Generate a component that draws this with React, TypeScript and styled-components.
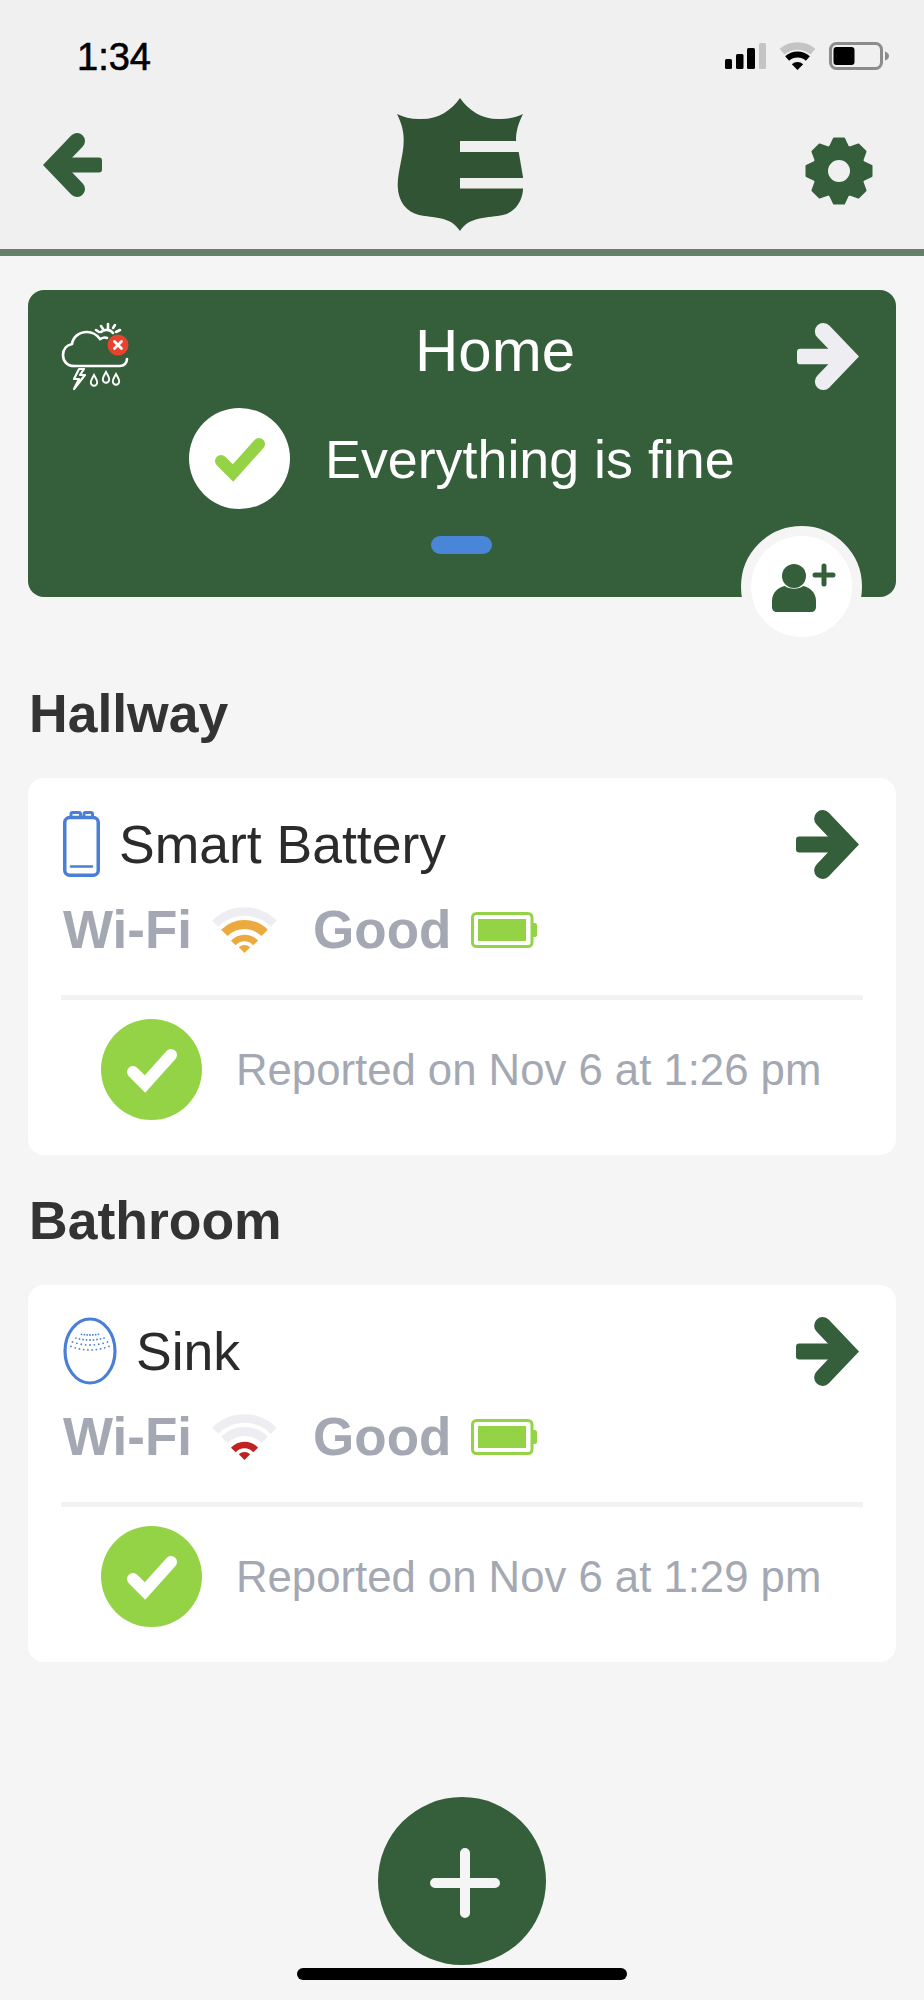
import React from 'react';
import styled, { createGlobalStyle } from 'styled-components';

const GREEN = '#355e3b';
const LIME = '#93d345';
const BLUE = '#4a7fd6';
const MUTED = '#a4a8b2';
const WIFI_OFF = '#eeeef2';

const GlobalStyle = createGlobalStyle`
  html, body {
    margin: 0;
    padding: 0;
    background: #f5f5f5;
  }
  * {
    box-sizing: border-box;
  }
`;

const Screen = styled.div`
  width: 924px;
  height: 2000px;
  display: flex;
  flex-direction: column;
  background: #f5f5f5;
  font-family: "Liberation Sans", Arial, sans-serif;
  overflow: hidden;
`;

const Header = styled.header`
  height: 256px;
  flex-shrink: 0;
  background: #f0f0f0;
  border-bottom: 7px solid #648068;
`;

const StatusBar = styled.div`
  height: 98px;
  padding: 38px 35px 0 77px;
  display: flex;
  justify-content: space-between;
  align-items: flex-start;
`;

const Time = styled.span`
  font-size: 38px;
  line-height: 38px;
  color: #000;
  -webkit-text-stroke: 0.6px #000;
`;

const StatusIcons = styled.div`
  display: flex;
  align-items: center;
  gap: 13px;
  margin-top: 4px;
`;

const NavBar = styled.nav`
  display: grid;
  grid-template-columns: 1fr 127px 1fr;
  align-items: center;
  height: 133px;
  padding: 0 46px 0 43px;
`;

const NavLeft = styled.div`
  justify-self: start;
  display: flex;
`;

const NavRight = styled.div`
  justify-self: end;
  display: flex;
  margin: 12px 5px 0 0;
`;

const Content = styled.main`
  padding: 34px 28px 0;
`;

const Hero = styled.section`
  position: relative;
  height: 307px;
  padding: 33px 37px 0 34px;
  background: ${GREEN};
  border-radius: 16px;
  color: #fff;
`;

const HeroTop = styled.div`
  display: flex;
  align-items: center;
  height: 66px;
`;

const HeroTitle = styled.h1`
  margin: -10px 0 0 283px;
  font-size: 60px;
  line-height: 66px;
  font-weight: 400;
`;

const HeroArrow = styled.div`
  margin-left: auto;
  display: flex;
`;

const HeroStatus = styled.div`
  display: flex;
  align-items: center;
  gap: 35px;
  margin: 19px 0 0 127px;
`;

const HeroStatusText = styled.span`
  font-size: 53.8px;
  line-height: 60px;
`;

const StatusCircle = styled.div<{ $bg: string }>`
  width: 101px;
  height: 101px;
  border-radius: 50%;
  flex-shrink: 0;
  display: flex;
  align-items: center;
  justify-content: center;
  background: ${p => p.$bg};
`;

const Pager = styled.div`
  width: 61px;
  height: 18px;
  margin: 27px auto 0;
  border-radius: 9px;
  background: #4a86d8;
  position: relative;
  left: 1px;
`;

const InviteBadge = styled.button`
  position: absolute;
  left: 713px;
  top: 236px;
  width: 121px;
  height: 121px;
  padding: 3px 0 0 5px;
  border: 10px solid #f5f5f5;
  border-radius: 50%;
  background: #fff;
  display: flex;
  align-items: center;
  justify-content: center;
`;

const SectionTitle = styled.h2`
  margin: 0;
  padding-left: 1px;
  font-size: 53.5px;
  line-height: 60px;
  font-weight: 700;
  color: #333;
`;

const HallwayTitle = styled(SectionTitle)`
  margin-top: 87px;
`;

const BathroomTitle = styled(SectionTitle)`
  margin-top: 36px;
`;

const DeviceCard = styled.article`
  height: 377px;
  margin-top: 34px;
  padding: 32px 33px 0;
  background: #fff;
  border-radius: 16px;
`;

const TitleRow = styled.div`
  display: flex;
  align-items: center;
  height: 68px;
  padding-left: 2px;
`;

const DeviceName = styled.h3<{ $gap: number }>`
  margin: 2px 0 0 ${p => p.$gap}px;
  font-size: 53.5px;
  line-height: 60px;
  font-weight: 400;
  color: #2b2b2b;
`;

const CardArrow = styled.div`
  margin-left: auto;
  margin-right: 4px;
  display: flex;
`;

const StatsRow = styled.div`
  display: flex;
  align-items: center;
  height: 68px;
  margin-top: 18px;
  padding-left: 2px;
`;

const StatLabel = styled.span`
  font-size: 53px;
  line-height: 60px;
  font-weight: 700;
  color: ${MUTED};
`;

const WifiSlot = styled.div`
  display: flex;
  margin: 0 36px 0 20px;
`;

const BatterySlot = styled.div`
  display: flex;
  margin-left: 20px;
`;

const Divider = styled.hr`
  height: 5px;
  margin: 31px 0 0;
  border: 0;
  background: #f2f2f2;
`;

const ReportRow = styled.div`
  display: flex;
  align-items: center;
  gap: 34px;
  margin-top: 19px;
  padding-left: 40px;
`;

const ReportText = styled.span`
  font-size: 43.7px;
  line-height: 50px;
  color: ${MUTED};
  white-space: nowrap;
`;

const Fab = styled.button`
  width: 168px;
  height: 168px;
  margin: 135px auto 0;
  padding: 4px 0 0 5px;
  border: 0;
  border-radius: 50%;
  background: ${GREEN};
  display: flex;
  align-items: center;
  justify-content: center;
  flex-shrink: 0;
`;

const HomeBar = styled.div`
  width: 330px;
  height: 12px;
  margin: 3px auto 0;
  border-radius: 6px;
  background: #000;
  flex-shrink: 0;
`;

const Arrow: React.FC<{ color: string; left?: boolean; w: number; h: number }> = ({ color, left, w, h }) => (
  <svg
    width={w}
    height={h}
    viewBox="0 0 59 64"
    preserveAspectRatio="none"
    style={left ? undefined : { transform: 'scaleX(-1)' }}
  >
    <rect x="12" y="24.5" width="47" height="15" rx="3" fill={color} />
    <path
      d="M34 8 L11 32 L34 56"
      stroke={color}
      strokeWidth="16"
      strokeLinecap="round"
      strokeLinejoin="miter"
      fill="none"
    />
  </svg>
);

const Gear = () => (
  <svg width="68" height="68" viewBox="0 0 68 68">
    {[0, 45, 90, 135, 180, 225, 270, 315].map(a => (
      <path
        key={a}
        d="M29 1.5 H39 L43.5 11 H24.5 Z"
        fill={GREEN}
        stroke={GREEN}
        strokeWidth="2"
        strokeLinejoin="round"
        transform={`rotate(${a} 34 34)`}
      />
    ))}
    <circle cx="34" cy="34" r="18.75" fill="none" stroke={GREEN} strokeWidth="15.5" />
  </svg>
);

const Shield = () => (
  <svg width="127" height="133" viewBox="0 0 127 133">
    <path
      d="M63 0 C72 13 86 22 104 21 C112 21 120 19 126 16 C121 26 119 34 119 42 L121.7 54 L126 79 L126 92
         C125 104 118 114 106 117 C92 120 72 118 63 133 C54 118 36 120 22 117 C10 114 1 104 0.7 88
         C0.7 72 6.7 58 6.7 42 C6.7 34 5 26 0 16 C6 19 14 21 22 21 C40 22 54 13 63 0 Z"
      fill="#315534"
    />
    <rect x="63" y="43" width="64" height="11" fill="#f0f0f0" />
    <rect x="63" y="80" width="64" height="10.5" fill="#f0f0f0" />
  </svg>
);

const polar = (cx: number, cy: number, r: number, deg: number) => {
  const t = (deg * Math.PI) / 180;
  return `${(cx + r * Math.sin(t)).toFixed(2)} ${(cy - r * Math.cos(t)).toFixed(2)}`;
};

const arc = (cx: number, cy: number, r: number, half: number) =>
  `M${polar(cx, cy, r, -half)} A${r} ${r} 0 0 1 ${polar(cx, cy, r, half)}`;

const wedge = (cx: number, cy: number, r: number, half: number) =>
  `M${cx} ${cy} L${polar(cx, cy, r, -half)} A${r} ${r} 0 0 1 ${polar(cx, cy, r, half)} Z`;

// tiers run from the outer arc to the wedge at the bottom
const Wifi: React.FC<{ tiers: string[] }> = ({ tiers }) => (
  <svg width="65" height="46" viewBox="0 0 65 46">
    <path d={arc(32.5, 46, 41.5, 45)} stroke={tiers[0]} strokeWidth="8.5" fill="none" />
    <path d={arc(32.5, 46, 28.5, 45)} stroke={tiers[1]} strokeWidth="9" fill="none" />
    <path d={arc(32.5, 46, 15, 48)} stroke={tiers[2]} strokeWidth="6.5" fill="none" />
    <path d={wedge(32.5, 46, 8, 45)} fill={tiers[3]} />
  </svg>
);

const StatusWifi = () => (
  <svg width="37" height="28" viewBox="0 0 37 28">
    <path d={arc(18.5, 28, 24, 40)} stroke="#c4c4c4" strokeWidth="7.5" fill="none" />
    <path d={arc(18.5, 28, 15.5, 42)} stroke="#000" strokeWidth="6" fill="none" />
    <path d={wedge(18.5, 28, 8, 45)} fill="#000" />
  </svg>
);

const Signal = () => (
  <svg width="41" height="26" viewBox="0 0 41 26">
    <rect x="0" y="16" width="7" height="10" rx="1.5" fill="#000" />
    <rect x="11" y="11" width="7.5" height="15" rx="1.5" fill="#000" />
    <rect x="22" y="5" width="8" height="21" rx="1.5" fill="#000" />
    <rect x="34" y="0" width="7" height="26" rx="1.5" fill="#c4c4c4" />
  </svg>
);

const StatusBattery = () => (
  <svg width="60" height="28" viewBox="0 0 60 28">
    <rect x="1.5" y="1.5" width="51" height="25" rx="6" fill="none" stroke="#8c8c8c" strokeWidth="3" />
    <rect x="4.5" y="5" width="21" height="18" rx="3" fill="#000" />
    <path d="M56 9.5 C58.5 10.5 60 12 60 14 C60 16 58.5 17.5 56 18.5 Z" fill="#8c8c8c" />
  </svg>
);

const LevelBattery = () => (
  <svg width="66" height="36" viewBox="0 0 66 36">
    <rect x="1.5" y="1.5" width="59.5" height="33" rx="4" fill="#fff" stroke={LIME} strokeWidth="3" />
    <rect x="7" y="7" width="48" height="22" fill={LIME} />
    <path d="M62 11 H64 C65 11 66 12 66 13 V23 C66 24 65 25 64 25 H62 Z" fill={LIME} />
  </svg>
);

const Check: React.FC<{ color: string }> = ({ color }) => (
  <svg width="56" height="46" viewBox="0 0 56 46">
    <path
      d="M9 25 L21 37 L47 8"
      stroke={color}
      strokeWidth="12"
      strokeLinecap="round"
      strokeLinejoin="miter"
      fill="none"
    />
  </svg>
);

const Weather = () => (
  <svg width="72" height="70" viewBox="0 0 72 70" style={{ marginLeft: -2 }}>
    <g stroke="#fff" fill="none" strokeWidth="2.6" strokeLinecap="round">
      <path d="M14 45 C7 45 3 40 3 34 C3 28 7 24 12 23 C13 16 19 11 27 11 C33 11 37 14 40 18 C42 17 45 16 47 17" />
      <path d="M14 45 H60 C64 45 67 42 67 38" />
      <path d="M41 11 C44 8 50 8 53 12" />
      <path d="M48 3 V7 M41 5 L43 8 M55 4 L53 7 M60 9 L56 11 M36 9 L39 11" />
    </g>
    <path d="M19 48 L14 58 H19 L14 68 L25 54 H20 L24 48 Z" fill="none" stroke="#fff" strokeWidth="2.2" strokeLinejoin="round" />
    {[
      [34, 60],
      [46, 57],
      [56, 59],
    ].map(([x, y]) => (
      <path
        key={x}
        d={`M${x} ${y - 6} C${x + 1.5} ${y - 3} ${x + 3.2} ${y - 1} ${x + 3.2} ${y + 1.5} A3.2 3.2 0 0 1 ${x - 3.2} ${y + 1.5} C${x - 3.2} ${y - 1} ${x - 1.5} ${y - 3} ${x} ${y - 6} Z`}
        fill="none"
        stroke="#fff"
        strokeWidth="1.9"
      />
    ))}
    <circle cx="58" cy="24" r="10.5" fill="#e8432e" />
    <path d="M54.5 20.5 L61.5 27.5 M61.5 20.5 L54.5 27.5" stroke="#fff" strokeWidth="2.8" strokeLinecap="round" />
  </svg>
);

const PersonAdd = () => (
  <svg width="66" height="50" viewBox="0 0 66 50">
    <path
      d="M1 44 V38 C1 29 8 24 14 23 C18 26.5 28 26.5 32 23 C38 24 45 29 45 38 V44 C45 47 43 49 40 49 H6 C3 49 1 47 1 44 Z"
      fill={GREEN}
    />
    <circle cx="23" cy="13" r="12" fill={GREEN} />
    <path d="M44 12 H62 M53 3 V21" stroke={GREEN} strokeWidth="5" strokeLinecap="round" />
  </svg>
);

const BatteryDevice = () => (
  <svg width="37" height="66" viewBox="0 0 37 66">
    <path
      d="M8 6 V3 C8 2 8.8 1.5 9.5 1.5 H16 C17 1.5 17.5 2 17.5 3 V6 M21 6 V3 C21 2 21.8 1.5 22.5 1.5 H28 C29 1.5 29.5 2 29.5 3 V6"
      fill="none"
      stroke={BLUE}
      strokeWidth="3"
    />
    <rect x="1.75" y="6.5" width="33.5" height="57.75" rx="5" fill="none" stroke={BLUE} strokeWidth="3.5" />
    <path d="M8 55.5 H29" stroke={BLUE} strokeWidth="2.6" strokeLinecap="round" />
  </svg>
);

const sensorDots = [
  { y: 18, n: 7, span: 17 },
  { y: 23, n: 9, span: 28 },
  { y: 28, n: 9, span: 35 },
  { y: 33, n: 10, span: 38 },
];

const SinkSensor = () => (
  <svg width="54" height="68" viewBox="0 0 54 68">
    <ellipse cx="27" cy="34" rx="25" ry="32" fill="none" stroke={BLUE} strokeWidth="3.2" />
    {sensorDots.map(row =>
      Array.from({ length: row.n }).map((_, i) => {
        const x = 27 - row.span / 2 + (row.span * i) / (row.n - 1);
        const dip = Math.pow((x - 27) / 20, 2) * 4;
        return <circle key={`${row.y}-${i}`} cx={x} cy={row.y - dip} r="0.9" fill={BLUE} />;
      }),
    )}
  </svg>
);

const PlusMark = () => (
  <svg width="70" height="70" viewBox="0 0 70 70">
    <path d="M5 35 H65 M35 5 V65" stroke="#f5f5f5" strokeWidth="10" strokeLinecap="round" />
  </svg>
);

interface Device {
  name: string;
  icon: React.ReactNode;
  gap: number;
  wifi: string[];
  reported: string;
}

const hallway: Device = {
  name: 'Smart Battery',
  icon: <BatteryDevice />,
  gap: 19,
  wifi: [WIFI_OFF, '#eca93f', '#eca93f', '#eca93f'],
  reported: 'Reported on Nov 6 at 1:26 pm',
};

const bathroom: Device = {
  name: 'Sink',
  icon: <SinkSensor />,
  gap: 19,
  wifi: [WIFI_OFF, WIFI_OFF, '#c02222', '#c02222'],
  reported: 'Reported on Nov 6 at 1:29 pm',
};

const DeviceRow: React.FC<{ device: Device }> = ({ device }) => (
  <DeviceCard>
    <TitleRow>
      {device.icon}
      <DeviceName $gap={device.gap}>{device.name}</DeviceName>
      <CardArrow>
        <Arrow color={GREEN} w={63} h={69} />
      </CardArrow>
    </TitleRow>
    <StatsRow>
      <StatLabel>Wi-Fi</StatLabel>
      <WifiSlot>
        <Wifi tiers={device.wifi} />
      </WifiSlot>
      <StatLabel>Good</StatLabel>
      <BatterySlot>
        <LevelBattery />
      </BatterySlot>
    </StatsRow>
    <Divider />
    <ReportRow>
      <StatusCircle $bg={LIME}>
        <Check color="#fff" />
      </StatusCircle>
      <ReportText>{device.reported}</ReportText>
    </ReportRow>
  </DeviceCard>
);

export default function App() {
  return (
    <Screen>
      <GlobalStyle />
      <Header>
        <StatusBar>
          <Time>1:34</Time>
          <StatusIcons>
            <Signal />
            <StatusWifi />
            <StatusBattery />
          </StatusIcons>
        </StatusBar>
        <NavBar>
          <NavLeft>
            <Arrow color={GREEN} left w={59} h={64} />
          </NavLeft>
          <Shield />
          <NavRight>
            <Gear />
          </NavRight>
        </NavBar>
      </Header>
      <Content>
        <Hero>
          <HeroTop>
            <Weather />
            <HeroTitle>Home</HeroTitle>
            <HeroArrow>
              <Arrow color="#eeeef2" w={62} h={67} />
            </HeroArrow>
          </HeroTop>
          <HeroStatus>
            <StatusCircle $bg="#fff">
              <Check color={LIME} />
            </StatusCircle>
            <HeroStatusText>Everything is fine</HeroStatusText>
          </HeroStatus>
          <Pager />
          <InviteBadge>
            <PersonAdd />
          </InviteBadge>
        </Hero>
        <HallwayTitle>Hallway</HallwayTitle>
        <DeviceRow device={hallway} />
        <BathroomTitle>Bathroom</BathroomTitle>
        <DeviceRow device={bathroom} />
      </Content>
      <Fab>
        <PlusMark />
      </Fab>
      <HomeBar />
    </Screen>
  );
}
